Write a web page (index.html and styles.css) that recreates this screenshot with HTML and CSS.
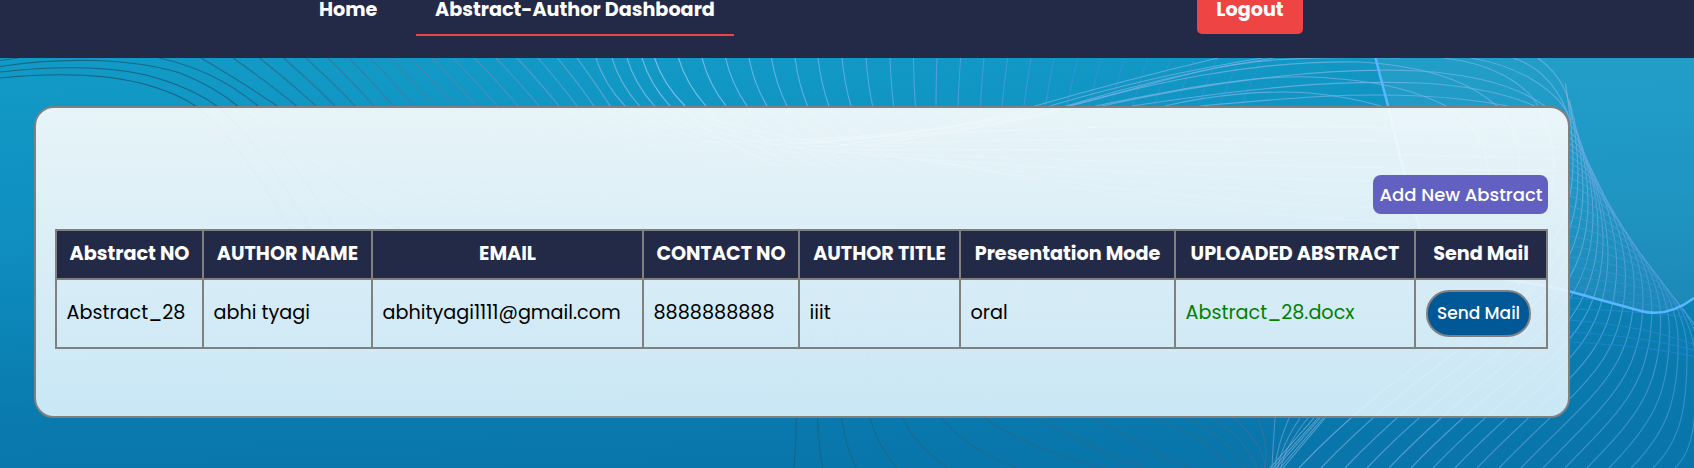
FILE: index.html
```html
<!DOCTYPE html>
<html lang="en">
<head>
<meta charset="utf-8">
<title>Abstract-Author Dashboard</title>
<link rel="stylesheet" href="styles.css">
</head>
<body>
<svg class="backdrop" viewBox="0 0 1694 468" aria-hidden="true">
  <path class="sheen" d="M1375 58L1388 106Q1405 180 1420 229C1435 285 1500 275 1570 291L1641 311Q1668 318 1694 298V58Z"/>
  <g id="waves"></g>
  <path class="ribbon" d="M1375 56L1388 106Q1405 180 1420 229C1435 285 1500 272 1570 291.5L1641 311Q1668 318 1694 298"/>
</svg>
<header class="navbar">
  <a class="nav-link home">Home</a>
  <a class="nav-link active">Abstract-Author Dashboard</a>
  <a class="logout">Logout</a>
</header>
<main class="card">
  <div class="toolbar"><button class="add">Add New Abstract</button></div>
  <table class="abstracts">
    <colgroup><col class="c1"><col class="c2"><col class="c3"><col class="c4"><col class="c5"><col class="c6"><col class="c7"><col class="c8"></colgroup>
    <thead><tr>
      <th>Abstract NO</th><th>AUTHOR NAME</th><th>EMAIL</th><th>CONTACT NO</th><th>AUTHOR TITLE</th><th>Presentation Mode</th><th>UPLOADED ABSTRACT</th><th>Send Mail</th>
    </tr></thead>
    <tbody><tr>
      <td>Abstract_28</td><td>abhi tyagi</td><td>abhityagi1111@gmail.com</td><td>8888888888</td><td>iiit</td><td>oral</td><td><a class="doc">Abstract_28.docx</a></td><td class="action"><button class="send">Send Mail</button></td>
    </tr></tbody>
  </table>
</main>
<script src="waves.js"></script>
</body>
</html>
```
FILE: styles.css
```css
* { box-sizing: border-box; }
body {
  margin: 0;
  height: 468px;
  overflow: hidden;
  background: linear-gradient(178deg, #129ac6 12%, #0f8fc0 45%, #0a7bae 78%, #0974aa 100%);
  font-family: Poppins, Inter, sans-serif;
  color: #000;
}
.backdrop { position: absolute; inset: 0; width: 1694px; height: 468px; z-index: -1; }
.backdrop path { fill: none; stroke-width: 1.1; }
.backdrop .sheen { fill: #fff; fill-opacity: .07; }
.backdrop .ribbon { stroke: #5ab6ff; stroke-width: 2.5; }
.navbar {
  display: flex;
  height: 58px;
  padding-left: 299px;
  background: #222a48;
  color: #fff;
  font-size: 19.2px;
  font-weight: 700;
  line-height: 19px;
}
.nav-link { height: 36px; padding: 0 19px; white-space: nowrap; }
.home { width: 117px; padding-left: 20px; }
.active { width: 318px; border-bottom: 2px solid #ef4444; }
.logout { width: 106px; height: 34px; margin-left: 463px; border-radius: 0 0 5px 5px; background: #ef4444; text-align: center; }
.card {
  width: 1536px;
  height: 312px;
  margin: 48px 0 0 34px;
  padding: 67px 20px 0 19px;
  border: 2px solid #808080;
  border-radius: 20px;
  background: linear-gradient(rgba(255,255,255,.9), rgba(243,249,252,.9) 38%, rgba(222,243,254,.9));
}
.toolbar { display: flex; justify-content: flex-end; height: 54px; }
button { font-family: inherit; color: #fff; padding: 0; white-space: nowrap; }
.add { width: 175px; height: 39px; padding-left: 1px; border: 0; border-radius: 8px; background: #6260c0; font-size: 18px; font-weight: 500; }
.abstracts { width: 1493px; table-layout: fixed; border-collapse: collapse; white-space: nowrap; }
.c1 { width: 147px; } .c2 { width: 169px; } .c3 { width: 271px; } .c4 { width: 156px; }
.c5 { width: 161px; } .c6 { width: 215px; } .c7 { width: 240px; } .c8 { width: 132px; }
th, td { border: 2px solid #808080; }
th { height: 49px; padding: 0 0 2px; background: #222a48; color: #fff; font-size: 19.2px; font-weight: 700; }
td { height: 69px; padding: 0 10px 3px 9.5px; font-size: 19.2px; font-weight: 400; }
td.action { padding: 0 10px 1px; }
.doc { color: #008000; }
.send { display: block; width: 105px; height: 47px; border: 2px solid #808080; border-radius: 23px; background: #005896; font-size: 17px; font-weight: 500; }
```
FILE: waves.js
```js
const layer = document.getElementById('waves');
function line(d, color, opacity = 1) {
  const p = document.createElementNS('http://www.w3.org/2000/svg', 'path');
  p.setAttribute('d', d);
  p.setAttribute('stroke', color);
  p.setAttribute('stroke-opacity', opacity);
  layer.appendChild(p);
}
function mix(a, b, t) {
  return 'rgb(' + a.map((v, i) => Math.round(v + (b[i] - v) * t)).join(',') + ')';
}
const dark = [20, 98, 130], grey = [72, 146, 190], light = [120, 190, 232], blue = [52, 145, 218];

// Arcs entering from the left edge
line('M0 78C50 73 100 73 140 83Q175 92 195.5 106Q240 140 290 229', mix(dark, grey, 0));
line('M0 72C60 65 120 66 160 79Q195 90 216.6 106Q262 145 310 229', mix(dark, grey, .05));
line('M0 66.5C60 57 130 58 180 73Q215 87 237.6 106Q290 150 335 229', mix(dark, grey, .1));
line('M0 60.5L18 58M159 58Q215 70 258 106Q330 190 400 229', mix(dark, grey, .15));

// Strands falling from the navbar to the card
const top1 = [201,233,259.5,283.5,306,328,349,370,390,411,432,453,474.5,496,517,538,557.5,577,596,612,627,642,654.5,678.5,702,725.6,749,771.5,795,818,842,866,890,913.5,937,960.6,984,1007.6,1031,1054,1077.6,1101,1124.5,1148,1171,1194,1217,1240,1262];
const low1 = [277,296.6,316,335,355,374,393,414,435,455,476,497,518,539,559,577,594,610,625,639.5,654.5,670,685,706,726,747,767,787,807.5,829,851,872.6,893.6,915.5,936,958,980.5,1002,1024,1045.6,1067,1089,1110.6,1132,1154,1176,1198,1219,1241];
top1.forEach((x, i) => {
  const y = low1[i];
  const bend = i < 18 ? (y - x) * .58 : i < 32 ? (y - x) * .28 : -(i - 32) * .35 + (y - x) * .3;
  const color = i < 12 ? mix(dark, grey, .2 + i / 15) : i < 22 ? mix(grey, light, (i - 12) / 10) : mix(light, blue, Math.min(1, (i - 22) / 18));
  const tail = i < 22 ? `Q${y + 60 + i * 3} ${190 - i * 2} ${y + 230} ${220 - i * 3.5}` : `q${10 + (i - 22)} 24 ${70 + i} ${60 + (i - 22)}`;
  line(`M${x} 58Q${x + bend} 84 ${y} 106`, color, i > 40 ? .7 : 1);
  line(`M${y} 106${tail}`, color, .5);
});

// Lines sweeping up and over the right end of the card
const sweep = 'rgb(110,178,224)';
[
  'M700 142C860 140 960 132 1035 106C1080 93 1150 74 1218 58',
  'M800 144C960 130 1020 117 1050 106Q1150 76 1262 58',
  'M840 145C980 128 1040 115 1066 106Q1170 74 1274 58',
  'M860 146C1000 126 1060 112 1070 106C1160 83 1200 66 1274 60Q1330 56 1400 58',
  'M1068 106C1150 84 1250 60 1360 62C1440 67 1475 87 1497 106Q1525 135 1518 180',
  'M1095 106C1180 89 1250 75 1310 77C1385 80 1420 93 1446 106Q1490 130 1490 190',
  'M1102 106C1200 84 1320 66 1420 71C1480 75 1520 88 1545 106',
  'M1132 106C1250 88 1330 80 1420 83C1475 86 1512 96 1535 106',
  'M1200 106C1300 97 1350 93 1420 96Q1465 98 1508 106',
  'M1165 106C1215 94 1270 90 1310 93Q1350 97 1381 106',
  'M1444 58C1490 63 1525 83 1538 106Q1562 150 1550 200',
  'M1471 58C1520 66 1555 90 1568 114',
  'M1513 58C1545 68 1562 95 1570 120',
  'M1538 58C1562 76 1570 96 1572 120'
].forEach(d => line(d, sweep, .8));
for (let i = 0; i < 8; i++) {
  line(`M${760 + i * 25} ${146 + i * 2}Q${1150 + i * 20} ${112 + i * 18} 1560 ${135 + i * 12}`, '#8ac6ee', .4);
}

// Outer edge of the lattice, as [x, y] knots
const edge = [[1571, 106], [1578, 135], [1590, 170], [1613, 213], [1640, 253], [1665, 286], [1685, 311], [1710, 342]];
function edgeY(x) {
  for (let i = 1; i < edge.length; i++) {
    const [x0, y0] = edge[i - 1], [x1, y1] = edge[i];
    if (x <= x1) return y0 + (y1 - y0) * (x - x0) / (x1 - x0);
  }
  return 342;
}

// Upright strands, outermost first
for (let k = -2; k < 17; k++) {
  const xb = 1653 - 22 * k - (k > 14 ? 2 : 0);
  const px = k < 9 ? 1687 - 8.8 * k : 1608 - (k - 9) * 5, py = k < 9 ? 353 - 11 * k : 254 - (k - 9) * 13;
  const ex = px - 22 + Math.max(0, k) * .9, ey = edgeY(ex);
  line(`M${xb} 468C${xb + 28 + 7 * k} ${440 - 7.5 * k} ${px} ${py + 55 + 5 * k} ${px} ${py}Q${px} ${py - 32} ${ex} ${ey}`, mix([65, 150, 212], [125, 182, 224], (k + 2) / 18), .7);
}

// Cross strands, top to bottom
[120,125,132,138,144,150,157,163,170,178,186,196,206,216,226,236,246,257,267,277,287,298,309,320,332,342].forEach((y, i) => {
  const ex = 1578 + i * 5.1, ey = i > 22 ? 345 + (i - 23) * 7 : edgeY(ex);
  line(`M1570 ${y}Q${1570 + (ex - 1570) * .62} ${y + (ey - y) * .25} ${ex} ${ey}`, mix([110, 178, 225], [35, 132, 212], i / 25), .75);
});
line('M1571 106Q1578 140 1590 170T1613 213L1640 253L1665 286L1694 324', '#5aa5dc', .8);

// Strands leaving below the card
const top2 = [796.5,817.5,841.6,870,903,942,985.5,1035,1094,1151,1185,1212,1233.6,1258,1275,1289,1300,1308];
const low2 = [794,822.5,856,897,948,1015,1105,1142,1188,1230,1245,1256.6,1265,1265,1272,1275,1278,1281];
top2.forEach((x, i) => {
  const y = low2[i];
  const k = i < 7 ? .28 : i < 9 ? .5 : .75;
  const c = i < 14 ? mix(dark, [60, 115, 155], i / 14) : '#5f9bc8';
  const ctrl = i < 9 ? [x + (y - x) * k, 446] : i < 12 ? [x + (y - x) * .75, 438] : [1265 + (i - 12) * 4, 446];
  line(`M${x} 418Q${ctrl} ${y} 468`, c, .8);
  if (i < 9) line(`M${x - 20} 290Q${x + 4} 350 ${x} 418`, c, .5);
});
// Tight bundle where the strands cross
[[1270, 1314], [1273, 1318], [1276, 1320], [1280, 1323], [1283, 1325]].forEach(([a, b]) => line(`M${a} 468L${b} 418`, '#7fb2dc', .7));
```
